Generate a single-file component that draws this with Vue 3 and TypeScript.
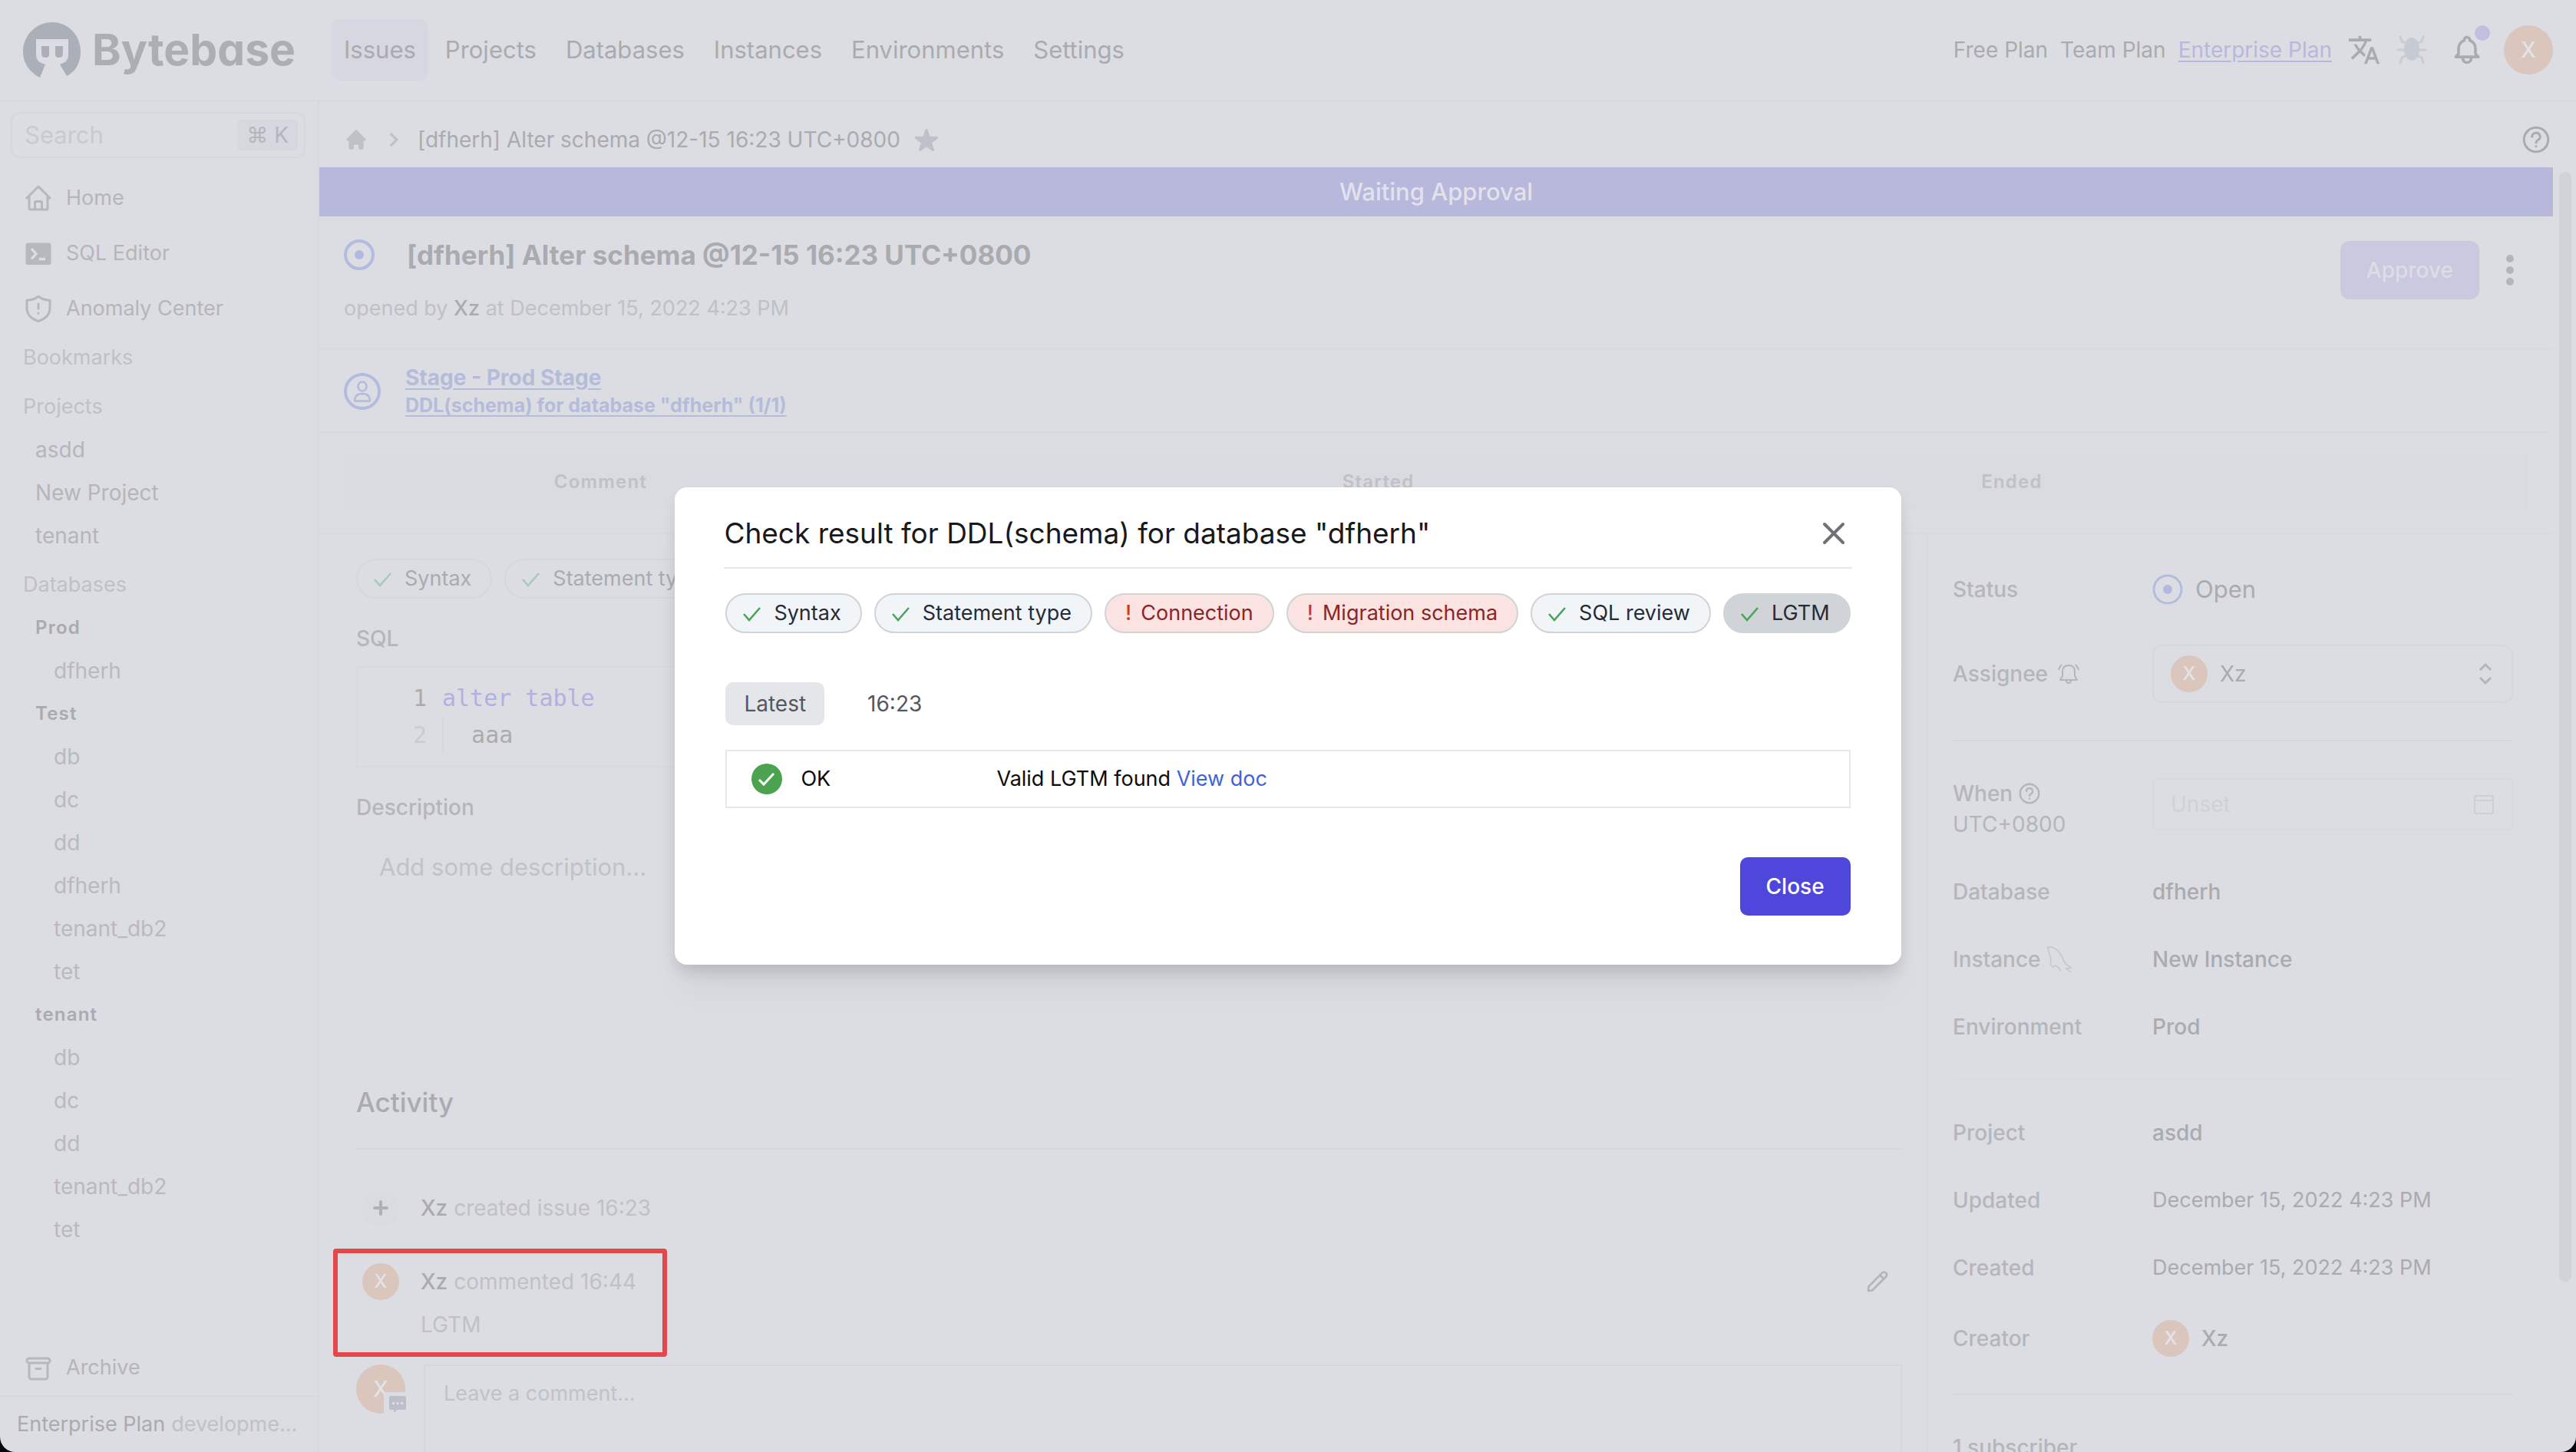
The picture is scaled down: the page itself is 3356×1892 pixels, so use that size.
<script setup lang="ts">
import { ref } from 'vue'

interface Chip {
  label: string
  state: 'ok' | 'error'
  active?: boolean
}
interface DatabaseGroup {
  name: string
  items: string[]
}

const navItems = ['Issues', 'Projects', 'Databases', 'Instances', 'Environments', 'Settings']
const projects = ['asdd', 'New Project', 'tenant']
const databaseGroups: DatabaseGroup[] = [
  { name: 'Prod', items: ['dfherh'] },
  { name: 'Test', items: ['db', 'dc', 'dd', 'dfherh', 'tenant_db2', 'tet'] },
  { name: 'tenant', items: ['db', 'dc', 'dd', 'tenant_db2', 'tet'] },
]
const chips: Chip[] = [
  { label: 'Syntax', state: 'ok' },
  { label: 'Statement type', state: 'ok' },
  { label: 'Connection', state: 'error' },
  { label: 'Migration schema', state: 'error' },
  { label: 'SQL review', state: 'ok' },
  { label: 'LGTM', state: 'ok', active: true },
]
const search = ref('')
const description = ref('')
const comment = ref('')
const assignee = ref('Xz')
const when = ref('')
</script>

<template>
  <div class="page">
    <header class="topbar">
      <a class="logo" href="#">
        <svg class="logo-mark" viewBox="0 0 76 72" aria-hidden="true">
          <path fill="#abafb8" d="M38 0C59 0 75 17 75 38C75 52 69 64 57 70L48 55Q59 52 59 43V22H17V43Q17 52 29 55L22 72C8 65 0 53 0 38C0 17 17 0 38 0Z" />
          <path fill="#abafb8" d="M24 31H34V42Q34 46 29 46Q24 46 24 40ZM42 31H52V40Q52 46 47 46Q42 46 42 42Z" />
        </svg>
        <span class="logo-text">Bytebase</span>
      </a>
      <nav class="nav">
        <a v-for="(item, i) in navItems" :key="item" href="#" :class="{ active: i === 0 }">{{ item }}</a>
      </nav>
      <div class="top-right">
        <a href="#">Free Plan</a>
        <a href="#">Team Plan</a>
        <a href="#" class="plan-current">Enterprise Plan</a>
        <div class="top-icons">
          <button class="icon-btn" aria-label="Language">
            <svg width="44" height="44" viewBox="0 0 24 24" fill="#a9abb0"><path d="M12.87 15.07l-2.54-2.51.03-.03A17.52 17.52 0 0 0 14.07 6H17V4h-7V2H8v2H1v2h11.17C11.5 7.92 10.44 9.75 9 11.35 8.07 10.32 7.3 9.19 6.69 8h-2c.73 1.63 1.73 3.17 2.98 4.56l-5.09 5.02L4 19l5-5 3.11 3.11.76-2.04zM18.5 10h-2L12 22h2l1.12-3h4.75L21 22h2l-4.500-12zm-2.620 7l1.620-4.330L19.120 17h-3.240z" /></svg>
          </button>
          <button class="icon-btn" aria-label="Debug">
            <svg width="40" height="40" viewBox="0 0 40 40" fill="none" stroke="#c9ccd3" stroke-width="3" stroke-linecap="round"><path d="M14 12L7 9L5 3M26 12L33 9L35 3M12 20H2M28 20H38M14 27L7 30L5 37M26 27L33 30L35 37" /><ellipse cx="20" cy="19" rx="10" ry="15" fill="#c6cad1" stroke="none" /></svg>
          </button>
          <button class="icon-btn bell" aria-label="Notifications">
            <svg width="44" height="44" viewBox="0 0 24 24" fill="none" stroke="#a9abb0" stroke-width="2" stroke-linecap="round" stroke-linejoin="round"><path d="M15 17h5l-1.400-1.400A2 2 0 0 1 18 14.160V11a6 6 0 0 0-4-5.660V5a2 2 0 1 0-4 0v.340C7.670 6.160 6 8.390 6 11v3.160c0 .540-.210 1.060-.600 1.440L4 17h5m6 0v1a3 3 0 1 1-6 0v-1m6 0H9" /></svg>
            <span class="bell-dot"></span>
          </button>
          <span class="avatar large">X</span>
        </div>
      </div>
    </header>

    <div class="body">
      <aside class="sidebar">
        <div class="sidebar-scroll">
          <label class="search">
            <input v-model="search" type="text" placeholder="Search" aria-label="Search" />
            <kbd>⌘ K</kbd>
          </label>
          <a class="side-main" href="#">
            <svg width="36" height="36" viewBox="0 0 24 24" fill="none" stroke="#b6b8bd" stroke-width="2" stroke-linecap="round" stroke-linejoin="round"><path d="M2 12L12 2l10 10M4 10v11a1 1 0 0 0 1 1h14a1 1 0 0 0 1-1V10M9 22v-6a1 1 0 0 1 1-1h4a1 1 0 0 1 1 1v6" /></svg>
            Home
          </a>
          <a class="side-main" href="#">
            <svg width="36" height="36" viewBox="0 0 24 24"><rect x="1" y="3" width="22" height="19" rx="2" fill="#b6b8bd" /><path d="M6 8l4 4.500-4 4.500M12.500 17H18" fill="none" stroke="#dcdde2" stroke-width="2.200" /></svg>
            SQL Editor
          </a>
          <a class="side-main" href="#">
            <svg width="36" height="36" viewBox="0 0 24 24" fill="none" stroke="#b6b8bd" stroke-width="2" stroke-linecap="round" stroke-linejoin="round"><path d="M12 1.500c3 2.300 6 3.300 10 3.300v6.700c0 5.500-4 9.500-10 11.500C6 21 2 17 2 11.500V4.800c4 0 7-1 10-3.300zM12 8v4M12 16v.1" /></svg>
            Anomaly Center
          </a>
          <div class="side-title">Bookmarks</div>
          <div class="side-title spaced">Projects</div>
          <a v-for="p in projects" :key="p" class="side-item" href="#">{{ p }}</a>
          <div class="side-title spaced">Databases</div>
          <template v-for="g in databaseGroups" :key="g.name">
            <div class="side-group">{{ g.name }}</div>
            <a v-for="d in g.items" :key="d" class="side-item nested" href="#">{{ d }}</a>
          </template>
        </div>
        <a class="side-main" href="#">
          <svg width="36" height="36" viewBox="0 0 24 24" fill="none" stroke="#b6b8bd" stroke-width="2" stroke-linecap="round" stroke-linejoin="round"><path d="M4 8h16M4 8a2 2 0 1 1 0-4h16a2 2 0 1 1 0 4M4 8v12a2 2 0 0 0 2 2h12a2 2 0 0 0 2-2V8M10 13h4" /></svg>
          Archive
        </a>
        <div class="side-footer"><a href="#">Enterprise Plan</a> developme...</div>
      </aside>

      <main class="main">
        <div class="crumbs">
          <svg width="32" height="32" viewBox="0 0 20 20" fill="#bfc1c8"><path d="M10.700 2.300a1 1 0 0 0-1.400 0l-7 7a1 1 0 0 0 1.400 1.400L4 10.400V17a1 1 0 0 0 1 1h2a1 1 0 0 0 1-1v-2a1 1 0 0 1 1-1h2a1 1 0 0 1 1 1v2a1 1 0 0 0 1 1h2a1 1 0 0 0 1-1v-6.600l.300.300a1 1 0 0 0 1.400-1.400l-7-7z" /></svg>
          <svg width="32" height="32" viewBox="0 0 20 20" fill="none" stroke="#bfc1c8" stroke-width="2"><path d="M8 5l5 5-5 5" /></svg>
          <a class="crumb" href="#">[dfherh] Alter schema @12-15 16:23 UTC+0800</a>
          <svg width="36" height="36" viewBox="0 0 20 20" fill="#bfc1c8"><path d="M9.050 2.930c.300-.920 1.600-.920 1.900 0l1.520 4.670h4.910c.970 0 1.370 1.240.590 1.810l-3.980 2.890 1.520 4.670c.300.920-.760 1.690-1.540 1.120L10 15.200l-3.970 2.890c-.780.570-1.840-.200-1.540-1.120l1.520-4.670-3.980-2.890c-.780-.570-.380-1.810.590-1.810h4.910z" /></svg>
          <button class="icon-btn help" aria-label="Help">
            <svg width="36" height="36" viewBox="0 0 24 24" fill="none" stroke="#a9abb0" stroke-width="2" stroke-linecap="round"><circle cx="12" cy="12" r="10.500" /><path d="M8.500 9.500a3.500 3.300 0 1 1 5.200 2.800c-1.200.700-1.700 1.200-1.700 2.200M12 17.800v.1" /></svg>
          </button>
        </div>

        <div class="content-wrap">
          <div class="content">
            <div class="banner">Waiting Approval</div>

            <section class="issue-head">
              <div class="issue-left">
                <div class="title-row">
                  <svg width="40" height="40" viewBox="0 0 40 40"><circle cx="20" cy="20" r="18" fill="none" stroke="#b3bbdf" stroke-width="4" /><circle cx="20" cy="20" r="6" fill="#b3b8df" /></svg>
                  <h1>[dfherh] Alter schema @12-15 16:23 UTC+0800</h1>
                </div>
                <p class="opened">opened by <a href="#">Xz</a> at December 15, 2022 4:23 PM</p>
              </div>
              <div class="issue-actions">
                <button class="approve" disabled>Approve</button>
                <button class="icon-btn" aria-label="More">
                  <svg width="48" height="48" viewBox="0 0 48 48" fill="#b3b5ba"><circle cx="24" cy="9" r="5" /><circle cx="24" cy="24" r="5" /><circle cx="24" cy="39" r="5" /></svg>
                </button>
              </div>
            </section>

            <section class="stage">
              <svg width="48" height="48" viewBox="0 0 48 48" fill="none" stroke="#b3bbdf"><circle cx="24" cy="24" r="22" stroke-width="4" /><g stroke-width="2.500"><ellipse cx="24" cy="17.500" rx="5.500" ry="6" /><path d="M14 36.500C14 30 18 27 24 27s10 3 10 9.500z" stroke-linejoin="round" /></g></svg>
              <div>
                <a class="stage-name" href="#">Stage - Prod Stage</a>
                <a class="stage-task" href="#">DDL(schema) for database "dfherh" (1/1)</a>
              </div>
            </section>

            <section class="runs">
              <table>
                <thead>
                  <tr><th>Comment</th><th>Started</th><th>Ended</th><th></th></tr>
                </thead>
              </table>
            </section>

            <div class="columns">
              <div class="left">
                <div class="chips faded">
                  <button v-for="c in chips.slice(0, 2)" :key="c.label" class="chip">
                    <svg width="28" height="28" viewBox="0 0 28 28" fill="none" stroke="#a9c9b4" stroke-width="2.500"><path d="M3 15l7 8L24 7" /></svg>
                    {{ c.label }}
                  </button>
                </div>
                <h2 class="label">SQL</h2>
                <div class="editor">
                  <div class="code-line"><span class="num current">1</span><code class="kw">alter table</code></div>
                  <div class="code-line"><span class="num">2</span><code class="guide">{{ '  aaa' }}</code></div>
                </div>
                <label class="label" for="description">Description</label>
                <textarea id="description" v-model="description" class="description" placeholder="Add some description..."></textarea>

                <h2 class="activity-title">Activity</h2>
                <ul class="activity">
                  <li>
                    <div class="act-row">
                      <span class="act-icon"><svg width="24" height="24" viewBox="0 0 24 24" stroke="#aeb0b5" stroke-width="4" stroke-linecap="round"><path d="M12 4v16M4 12h16" /></svg></span>
                      <p><a href="#">Xz</a> created issue 16:23</p>
                    </div>
                  </li>
                  <li class="marked">
                    <div class="act-row">
                      <span class="avatar">X</span>
                      <p><a href="#">Xz</a> commented 16:44</p>
                      <button class="icon-btn edit" aria-label="Edit comment">
                        <svg width="32" height="32" viewBox="0 0 24 24" fill="none" stroke="#b3b5ba" stroke-width="2" stroke-linejoin="round"><path d="M16.500 3.500a2.500 2.500 0 0 1 3.800 0a2.500 2.500 0 0 1 0 3.600L6.800 20.600L3 21l.300-4.100zM14.500 5.700l3.800 3.700" /></svg>
                      </button>
                    </div>
                    <p class="act-text">LGTM</p>
                    <span class="mark"></span>
                  </li>
                </ul>
                <div class="comment-row">
                  <span class="avatar large commenter">X
                    <span class="bubble">
                      <svg width="24" height="24" viewBox="0 0 24 24"><path d="M3 1h18a2 2 0 0 1 2 2v14a2 2 0 0 1-2 2h-9l-5 4v-4H3a2 2 0 0 1-2-2V3a2 2 0 0 1 2-2z" fill="#bcbec9" /><path d="M5 9h3v3H5zM10.500 9h3v3h-3zM16 9h3v3h-3z" fill="#dcdde2" /></svg>
                    </span>
                  </span>
                  <textarea v-model="comment" class="comment" placeholder="Leave a comment..." aria-label="Leave a comment"></textarea>
                </div>
              </div>

              <aside class="details">
                <div class="row status">
                  <span class="name">Status</span>
                  <span class="value open">
                    <svg width="40" height="40" viewBox="0 0 40 40"><circle cx="20" cy="20" r="18" fill="none" stroke="#b3bbdf" stroke-width="3" /><circle cx="20" cy="20" r="6" fill="#b3b8df" /></svg>
                    Open
                  </span>
                </div>
                <div class="row">
                  <label class="name" for="assignee">Assignee
                    <svg width="30" height="30" viewBox="0 0 30 30" fill="none" stroke="#b3b5ba" stroke-width="2" stroke-linejoin="round"><path d="M4 23h22l-3-5v-6c0-5-3-8-8-8s-8 3-8 8v6zM12 24a3 3 0 0 0 6 0M6 3Q3 6 2 10M24 3q3 3 4 7" /></svg>
                  </label>
                  <div class="select">
                    <span class="avatar">X</span>
                    <select id="assignee" v-model="assignee"><option>Xz</option></select>
                    <svg width="24" height="32" viewBox="0 0 24 32" fill="none" stroke="#b3b5ba" stroke-width="3"><path d="M5 11l7-7 7 7M5 21l7 7 7-7" /></svg>
                  </div>
                </div>
                <hr />
                <div class="row when">
                  <label class="name tight" for="when">When
                    <svg width="28" height="28" viewBox="0 0 24 24" fill="none" stroke="#b3b5ba" stroke-width="2" stroke-linecap="round"><circle cx="12" cy="12" r="10.500" /><path d="M8.500 9.500a3.500 3.300 0 1 1 5.200 2.800c-1.200.700-1.700 1.200-1.700 2.200M12 17.800v.1" /></svg>
                    <span class="zone">UTC+0800</span>
                  </label>
                  <div class="date">
                    <input id="when" v-model="when" type="text" placeholder="Unset" disabled />
                    <svg width="28" height="28" viewBox="0 0 28 28" fill="none" stroke="#cdcfd5" stroke-width="2"><rect x="2" y="3" width="24" height="23" rx="2" /><path d="M2 9h24" /></svg>
                  </div>
                </div>
                <div class="row"><span class="name">Database</span><a class="value strong" href="#">dfherh</a></div>
                <div class="row">
                  <span class="name tight">Instance
                    <svg width="32" height="36" viewBox="0 0 32 36" fill="none" stroke="#bfc7cf" stroke-width="1.500"><path d="M5 25C4 22 6 19 4 14C2 9 1 5 1 2C8 1 15 6 19 14C22 20 23 24 27 26L31 29L25 30L31 35M5 25Q8 31 10 26Q14 27 18 33" /></svg>
                  </span>
                  <a class="value strong" href="#">New Instance</a>
                </div>
                <div class="row"><span class="name">Environment</span><a class="value strong" href="#">Prod</a></div>
                <hr class="faint" />
                <div class="row"><span class="name">Project</span><a class="value strong" href="#">asdd</a></div>
                <div class="row"><span class="name">Updated</span><span class="value date-text">December 15, 2022 4:23 PM</span></div>
                <div class="row"><span class="name">Created</span><span class="value date-text">December 15, 2022 4:23 PM</span></div>
                <div class="row"><span class="name">Creator</span><span class="value person"><span class="avatar">X</span><a class="strong" href="#">Xz</a></span></div>
                <hr />
                <div class="row"><span class="name">1 subscriber</span></div>
              </aside>
            </div>
          </div>
          <div class="scrollbar"><div class="thumb"></div></div>
        </div>
      </main>
    </div>

    <div class="overlay">
      <div class="modal" role="dialog" aria-labelledby="dialog-title">
        <div class="modal-head">
          <h2 id="dialog-title">Check result for DDL(schema) for database "dfherh"</h2>
          <button class="icon-btn" aria-label="Dismiss">
            <svg width="48" height="48" viewBox="0 0 24 24" fill="none" stroke="#6f7176" stroke-width="2" stroke-linecap="round"><path d="M6 6l12 12M18 6L6 18" /></svg>
          </button>
        </div>
        <div class="modal-body">
          <div class="chips">
            <button v-for="c in chips" :key="c.label" class="chip" :class="[c.state, { active: c.active }]">
              <svg v-if="c.state === 'ok'" width="28" height="28" viewBox="0 0 28 28" fill="none" stroke="#4ba35a" stroke-width="2.500"><path d="M3 15l7 8L24 7" /></svg>
              <span v-else class="bang">!</span>
              {{ c.label }}
            </button>
          </div>
          <div class="tabs">
            <button class="tab current">Latest</button>
            <button class="tab">16:23</button>
          </div>
          <table class="result">
            <tbody>
              <tr>
                <td class="res-status">
                  <span>
                    <svg width="40" height="40" viewBox="0 0 40 40"><circle cx="20" cy="20" r="20" fill="#4ba24f" /><path d="M10 21l6 6 13-14" fill="none" stroke="#fff" stroke-width="3" /></svg>
                    OK
                  </span>
                </td>
                <td>Valid LGTM found <a href="#">View doc</a></td>
              </tr>
            </tbody>
          </table>
          <div class="modal-foot"><button class="close">Close</button></div>
        </div>
      </div>
    </div>
  </div>
</template>

<style>
html,
body {
  margin: 0;
  background: #07060f;
}
</style>

<style scoped>
.page {
  --bg: #dcdde2;
  --line: #d5d7dc;
  --dark: #a9abb0;
  --mid: #b4b6bb;
  --soft: #bfc1c7;
  position: relative;
  height: 100vh;
  overflow: hidden;
  display: flex;
  flex-direction: column;
  background: var(--bg);
  border-radius: 0 0 20px 20px;
  color: var(--dark);
  font-family: Inter, "Liberation Sans", sans-serif;
  font-size: 28px;
  line-height: 40px;
}
.page *,
.page *::before {
  box-sizing: border-box;
}
svg {
  display: block;
  flex: none;
}
a {
  color: inherit;
  text-decoration: none;
}
p, h1, h2, ul {
  margin: 0;
  padding: 0;
}
button, input, textarea, select {
  margin: 0;
  padding: 0;
  border: 0;
  background: none;
  color: inherit;
  font: inherit;
  opacity: 1;
}
hr {
  width: 100%;
  height: 2px;
  margin: 0;
  border: 0;
  background: var(--line);
}
hr.faint {
  background: #dadbe0;
}
.icon-btn {
  display: flex;
}
.avatar {
  display: flex;
  flex: none;
  align-items: center;
  justify-content: center;
  width: 48px;
  height: 48px;
  border-radius: 50%;
  background: #dac6bc;
  color: #e3e3e8;
  font-size: 24px;
  font-weight: 500;
}
.avatar.large {
  width: 64px;
  height: 64px;
  font-size: 28px;
}

.topbar {
  display: flex;
  flex: none;
  align-items: center;
  height: 132px;
  padding: 0 30px;
  border-bottom: 2px solid #d9dadf;
}
.logo {
  display: flex;
  align-items: center;
  width: 402px;
}
.logo-mark {
  width: 76px;
  height: 72px;
}
.logo-text {
  margin-left: 14px;
  color: #abaeb4;
  font-size: 57px;
  font-weight: 700;
  line-height: 64px;
  font-feature-settings: "cv11";
}
.nav {
  display: flex;
  flex: 1;
  gap: 6px;
}
.nav a {
  padding: 20px 16px;
  border-radius: 12px;
  font-size: 31px;
}
.nav a.active {
  background: #d6d7e0;
}
.top-right {
  display: flex;
  align-items: center;
  gap: 16px;
}
.top-icons {
  display: flex;
  align-items: center;
  gap: 20px;
  margin-left: 4px;
}
.plan-current {
  color: #b8b7dd;
  text-decoration: underline;
  text-underline-offset: 4px;
}
.bell {
  position: relative;
  margin: 0 6px 0 10px;
}
.bell-dot {
  position: absolute;
  top: -10px;
  right: -8px;
  width: 20px;
  height: 20px;
  border-radius: 50%;
  background: #c0bfe0;
}

.body {
  display: flex;
  flex: 1;
  min-height: 0;
}
.sidebar {
  display: flex;
  flex: none;
  flex-direction: column;
  width: 416px;
  border-right: 2px solid #d8d9de;
  color: var(--mid);
}
.sidebar-scroll {
  flex: 1;
  min-height: 0;
  padding-top: 14px;
}
.search {
  display: flex;
  align-items: center;
  height: 60px;
  margin: 0 16px 16px 14px;
  padding: 0 8px 0 16px;
  border: 2px solid var(--line);
  border-radius: 12px;
}
.search input {
  flex: 1;
  min-width: 0;
  font-size: 31px;
}
.search input::placeholder {
  color: #c8cad0;
  opacity: 1;
}
kbd {
  padding: 0 12px;
  border-radius: 6px;
  background: #d7d8df;
  font-family: Inter, "DejaVu Sans", sans-serif;
}
.side-main {
  display: flex;
  flex: none;
  align-items: center;
  gap: 18px;
  height: 72px;
  padding-left: 32px;
  font-size: 27px;
}
.side-title,
.side-item,
.side-group {
  display: flex;
  align-items: center;
  height: 56px;
  padding-left: 30px;
  color: var(--soft);
  font-size: 27px;
}
.side-title.spaced {
  margin-top: 8px;
}
.side-item {
  padding-left: 46px;
  color: var(--mid);
  font-size: 28px;
}
.side-item.nested {
  padding-left: 70px;
  color: #b8babf;
}
.side-group {
  padding-left: 46px;
  color: var(--dark);
  font-size: 24px;
  font-weight: 600;
  letter-spacing: 0.05em;
}
.side-footer {
  display: flex;
  flex: none;
  align-items: center;
  gap: 8px;
  height: 74px;
  padding-left: 22px;
  border-top: 2px solid #d8d9de;
  color: var(--soft);
  font-size: 27px;
  white-space: nowrap;
}
.side-footer a {
  color: var(--dark);
}

.main {
  display: flex;
  flex: 1;
  flex-direction: column;
  min-width: 0;
}
.crumbs {
  display: flex;
  flex: none;
  align-items: center;
  gap: 16px;
  height: 72px;
  margin-top: 14px;
  padding: 0 34px 0 32px;
}
.help {
  margin-left: auto;
}
.content-wrap {
  display: flex;
  flex: 1;
  min-height: 0;
}
.content {
  flex: 1;
  min-width: 0;
  overflow: hidden;
}
.scrollbar {
  width: 30px;
  padding: 6px 6px 222px 8px;
}
.thumb {
  height: 100%;
  border-radius: 8px;
  background: #d1d2da;
}
.banner {
  height: 64px;
  background: #b8b7dc;
  color: #e2e2ed;
  font-size: 31px;
  font-weight: 500;
  line-height: 64px;
  text-align: center;
}
.issue-head {
  display: flex;
  justify-content: space-between;
  padding: 30px 32px 32px;
  border-bottom: 2px solid #d9dae0;
}
.title-row {
  display: flex;
  align-items: center;
  gap: 42px;
}
h1 {
  font-size: 35px;
  font-weight: 700;
  line-height: 40px;
}
.opened {
  margin-top: 30px;
  color: var(--soft);
  font-size: 27px;
}
.opened a {
  color: var(--dark);
  font-weight: 500;
}
.issue-actions {
  display: flex;
  align-items: center;
  gap: 16px;
  height: 80px;
}
.approve {
  height: 76px;
  padding: 0 34px;
  border-radius: 12px;
  background: #cac9df;
  color: #dddde8;
  font-weight: 500;
}
.stage {
  display: flex;
  align-items: center;
  gap: 32px;
  padding: 18px 32px 16px;
  border-bottom: 2px solid #d9dae0;
  color: #b5bcda;
  font-weight: 700;
  line-height: 36px;
}
.stage a {
  display: block;
  text-decoration: underline;
  text-underline-offset: 4px;
}
.stage-task {
  font-size: 25px;
}
.runs {
  padding: 28px 32px 30px;
  border-bottom: 2px solid #d9dae0;
}
.runs table {
  width: 100%;
  border-collapse: collapse;
  table-layout: fixed;
  background: #dadbe0;
}
.runs th {
  height: 72px;
  padding: 0;
  color: var(--soft);
  font-size: 24px;
  font-weight: 600;
  letter-spacing: 0.05em;
}
.runs th:nth-child(1) {
  width: 23.5%;
}
.runs th:nth-child(2) {
  width: 47.7%;
}
.runs th:nth-child(3) {
  width: 10.3%;
}

.columns {
  display: flex;
}
.left {
  display: flex;
  flex: 1;
  flex-direction: column;
  min-width: 0;
  padding: 32px 32px 0 48px;
}
.chips {
  display: flex;
  gap: 16px;
  font-size: 27px;
}
.chip {
  display: flex;
  align-items: center;
  gap: 14px;
  height: 52px;
  padding: 0 25px 0 19px;
  border: 2px solid #d1d3d6;
  border-radius: 26px;
  background: #f2f5f8;
  color: #262b36;
  white-space: nowrap;
}
.chip.error {
  gap: 12px;
  padding: 0 25px;
  background: #fbe3e1;
  color: #8c2524;
}
.bang {
  color: #c93a33;
  font-weight: 500;
}
.chip.active {
  border-color: #d0d4d9;
  background: #d0d4d9;
}
.faded .chip {
  border-color: var(--line);
  background: #dbdde2;
  color: var(--dark);
}
.label {
  display: block;
  margin-top: 32px;
  color: var(--mid);
  font-size: 28px;
  font-weight: 500;
  line-height: 40px;
}
.editor {
  height: 132px;
  margin-top: 16px;
  padding: 16px 0;
  border: 2px solid #d8d9de;
}
.code-line {
  display: flex;
  height: 48px;
  font-family: "DejaVu Sans Mono", "Liberation Mono", monospace;
  font-size: 30px;
  line-height: 48px;
}
.code-line code {
  font-family: inherit;
  white-space: pre;
}
.num {
  width: 90px;
  margin-right: 20px;
  color: #c9cbd1;
  text-align: right;
}
.num.current {
  color: var(--dark);
}
.kw {
  color: #b0b0e2;
}
.guide {
  border-left: 2px solid var(--line);
}
.description {
  flex: none;
  display: block;
  height: 294px;
  margin-top: 16px;
  padding: 18px 30px;
  resize: none;
  font-size: 31px;
  line-height: 48px;
}
textarea::placeholder {
  color: #bfc3c9;
  opacity: 1;
}
.activity-title {
  margin-top: 30px;
  padding-bottom: 36px;
  border-bottom: 2px solid var(--line);
  font-size: 35px;
  font-weight: 500;
  line-height: 48px;
}
.activity {
  display: flex;
  flex-direction: column;
  gap: 48px;
  margin-top: 52px;
  color: var(--soft);
  list-style: none;
}
.act-row {
  display: flex;
  align-items: center;
  gap: 28px;
  padding-left: 8px;
}
.act-row a {
  color: var(--dark);
  font-weight: 500;
}
.act-icon {
  display: flex;
  align-items: center;
  justify-content: center;
  width: 48px;
  height: 48px;
  border-radius: 50%;
  background: #dadbe1;
}
.edit {
  margin-left: auto;
  margin-right: 16px;
}
.act-text {
  margin-top: 12px;
  padding-left: 84px;
}
.marked {
  position: relative;
}
.mark {
  position: absolute;
  top: -19px;
  left: -30px;
  width: 435px;
  height: 141px;
  border: 6px solid #e5484b;
  border-radius: 4px;
}
.comment-row {
  display: flex;
  gap: 24px;
  margin-top: 32px;
}
.commenter {
  position: relative;
}
.bubble {
  position: absolute;
  top: 36px;
  left: 36px;
  padding: 4px 0 4px 6px;
  background: var(--bg);
}
.comment {
  flex: 1;
  height: 160px;
  padding: 16px 24px;
  border: 2px solid var(--line);
  resize: none;
  font-size: 27px;
}

.details {
  display: flex;
  flex: none;
  flex-direction: column;
  gap: 48px;
  width: 816px;
  padding: 52px 52px 0 32px;
  border-left: 2px solid #d9dae0;
}
.row {
  display: flex;
  align-items: center;
}
.row.status {
  align-items: flex-start;
  min-height: 44px;
}
.row.when {
  align-items: flex-start;
}
.name {
  display: flex;
  flex: none;
  flex-wrap: wrap;
  align-items: center;
  gap: 0 12px;
  width: 260px;
  color: var(--mid);
  font-weight: 500;
}
.name.tight {
  gap: 0 8px;
}
.zone {
  width: 100%;
  font-weight: 400;
}
.value {
  display: flex;
  align-items: center;
}
.date-text {
  font-size: 27px;
}
.strong {
  font-weight: 500;
}
.open {
  gap: 16px;
  font-size: 31px;
}
.person {
  gap: 16px;
}
.select,
.date {
  display: flex;
  flex: 1;
  align-items: center;
  min-width: 0;
  height: 76px;
  padding: 0 22px;
  border: 2px solid var(--line);
  border-radius: 12px;
}
.select select {
  flex: 1;
  margin-left: 16px;
  appearance: none;
}
.date {
  height: 68px;
  border-radius: 4px;
  border-color: #d8d9de;
}
.date input {
  flex: 1;
  min-width: 0;
}
.date input::placeholder {
  color: #cfd1d7;
  opacity: 1;
}

.overlay {
  position: absolute;
  inset: 0;
  display: flex;
  align-items: center;
  justify-content: center;
}
.modal {
  padding: 36px 64px 64px;
  border-radius: 16px;
  background: #fff;
  box-shadow: 0 40px 50px -10px rgba(0, 0, 0, 0.05), 0 12px 20px -4px rgba(0, 0, 0, 0.14);
}
.modal-head {
  display: flex;
  align-items: center;
  justify-content: space-between;
  padding-bottom: 20px;
  border-bottom: 2px solid #e5e7eb;
}
.modal-head h2 {
  color: #18191b;
  font-size: 37px;
  font-weight: 400;
  line-height: 48px;
}
.modal-body {
  padding: 32px 2px 0;
}
.tabs {
  display: flex;
  gap: 32px;
  margin-top: 64px;
}
.tab {
  height: 56px;
  padding: 0 24px;
  border-radius: 10px;
  color: #55575c;
}
.tab.current {
  background: #e5e6ea;
}
.result {
  width: 100%;
  margin-top: 32px;
  border: 2px solid #e5e7e9;
  border-collapse: collapse;
  color: #0c0c0d;
  font-size: 27px;
}
.result td {
  height: 74px;
  padding: 0;
}
.result a {
  color: #3f63d8;
}
.res-status {
  width: 352px;
}
.res-status span {
  display: flex;
  align-items: center;
  gap: 24px;
  padding-left: 32px;
}
.modal-foot {
  display: flex;
  justify-content: flex-end;
  margin-top: 64px;
}
.close {
  height: 76px;
  padding: 0 34px;
  border-radius: 10px;
  background: #4f46dc;
  color: #fff;
  font-weight: 500;
}
</style>
